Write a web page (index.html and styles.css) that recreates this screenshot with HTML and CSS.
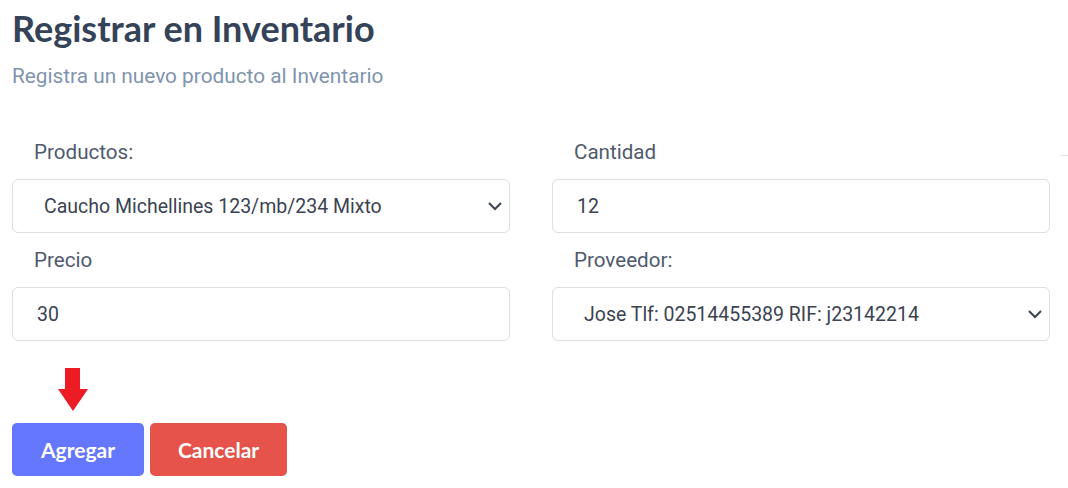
FILE: index.html
```html
<!DOCTYPE html>
<html lang="es">
<head>
<meta charset="utf-8">
<link rel="stylesheet" href="styles.css">
</head>
<body>
<div class="page">
  <h1 class="title">Registrar en Inventario</h1>
  <p class="subtitle">Registra un nuevo producto al Inventario</p>
  <form class="form">
    <div class="grid">
      <div class="field">
        <label class="label">Productos:</label>
        <div class="control select">
          <span>Caucho Michellines 123/mb/234 Mixto</span>
          <svg class="chev" width="16" height="10" viewBox="0 0 16 10"><path d="M2 2l6 6 6-6" fill="none" stroke="#3b4351" stroke-width="2"/></svg>
        </div>
      </div>
      <div class="field">
        <label class="label">Cantidad</label>
        <div class="control input"><span>12</span></div>
      </div>
      <div class="field">
        <label class="label">Precio</label>
        <div class="control input"><span>30</span></div>
      </div>
      <div class="field">
        <label class="label">Proveedor:</label>
        <div class="control select">
          <span>Jose Tlf: 02514455389 RIF: j23142214</span>
          <svg class="chev" width="16" height="10" viewBox="0 0 16 10"><path d="M2 2l6 6 6-6" fill="none" stroke="#3b4351" stroke-width="2"/></svg>
        </div>
      </div>
    </div>
    <div class="actions">
      <div class="btn-wrap">
        <svg class="arrow" width="30" height="43" viewBox="0 0 30 43"><path d="M7 0h15v21h8L15 43 0 21h7z" fill="#ed1c24"/></svg>
        <button type="button" class="btn btn-primary">Agregar</button>
      </div>
      <button type="button" class="btn btn-danger">Cancelar</button>
    </div>
  </form>
</div>
<div class="edge"></div>
</body>
</html>
```
FILE: styles.css
```css
html, body {
  margin: 0;
  padding: 0;
  background: #fff;
}
.page {
  padding: 6px 18px 0 12px;
  font-family: Roboto, "Liberation Sans", sans-serif;
}
.title {
  margin: 0;
  font-family: Lato, "Open Sans", sans-serif;
  font-weight: 700;
  font-size: 36px;
  line-height: 44px;
  color: #344357;
}
.subtitle {
  margin: 13px 0 0;
  font-size: 20.8px;
  line-height: 26px;
  color: #8094ae;
}
.form {
  margin-top: 50px;
}
.grid {
  display: grid;
  grid-template-columns: 498px 498px;
  column-gap: 42px;
  row-gap: 0;
}
.field {
  display: flex;
  flex-direction: column;
}
.label {
  padding-left: 22px;
  font-size: 20.6px;
  line-height: 26px;
  color: #4f5a6e;
  margin-bottom: 14px;
}
.control {
  height: 54px;
  box-sizing: border-box;
  border: 1px solid #dcdfe4;
  border-radius: 6px;
  display: flex;
  align-items: center;
  font-size: 19.5px;
  color: #3b4351;
  margin-bottom: 14px;
}
.input {
  padding-left: 24px;
}
.select {
  padding-left: 31px;
  padding-right: 6px;
  justify-content: space-between;
}
.chev {
  display: block;
}
.actions {
  display: flex;
  align-items: flex-end;
  gap: 6px;
  margin-top: 13px;
}
.btn-wrap {
  display: flex;
  flex-direction: column;
  align-items: flex-start;
}
.arrow {
  display: block;
  margin-left: 46px;
  margin-bottom: 12px;
}
.btn {
  border: none;
  border-radius: 5px;
  height: 53px;
  font-family: Lato, "Open Sans", sans-serif;
  font-weight: 700;
  font-size: 21px;
  color: #fff;
  cursor: pointer;
}
.btn-primary {
  width: 132px;
  background: #6576ff;
}
.btn-danger {
  width: 137px;
  background: #e5534b;
}
.edge {
  position: absolute;
  top: 0;
  right: 0;
  width: 8px;
  height: 155px;
  border-bottom: 1px solid #e5e5e5;
}
```
